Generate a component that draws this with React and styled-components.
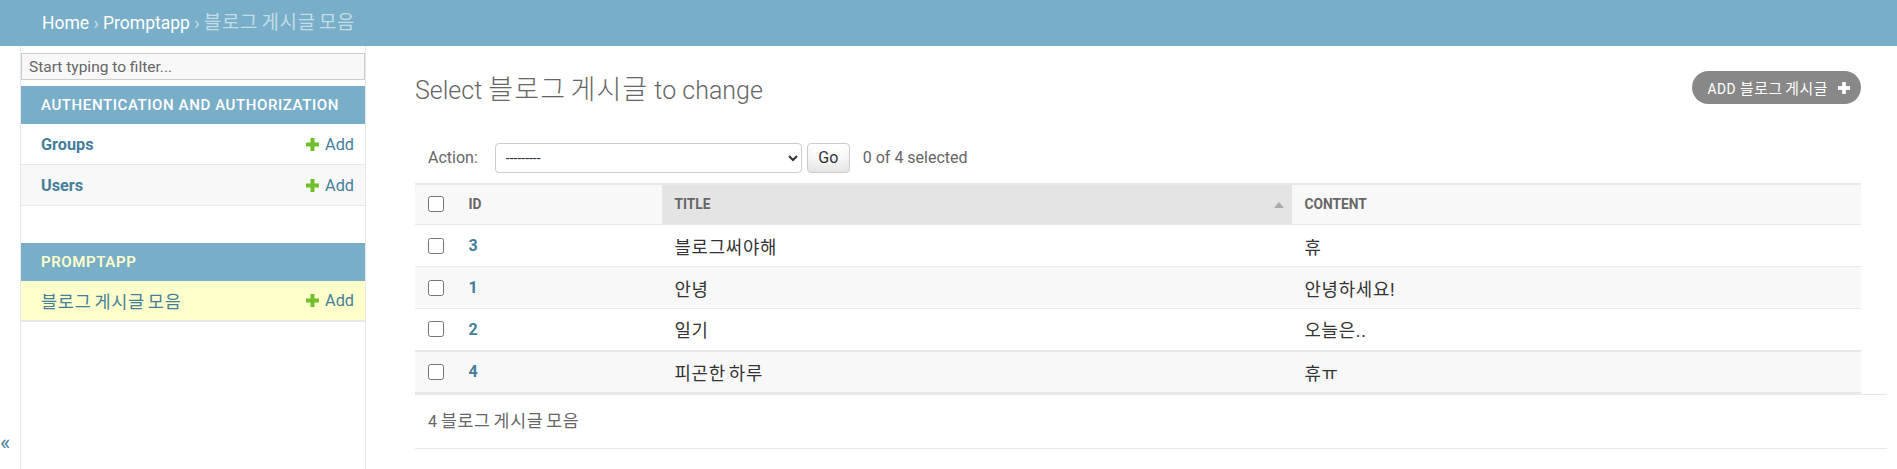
import React from 'react';
import styled, { createGlobalStyle } from 'styled-components';

const GlobalStyle = createGlobalStyle`
  html, body {
    margin: 0;
    padding: 0;
    background: #fff;
  }
  body {
    font-family: Roboto, "Noto Sans CJK KR", sans-serif;
    color: #333;
    font-size: 16.25px;
  }
  * { box-sizing: border-box; }
`;

// hangul in the original is a bit wider than the fallback font, spaces narrower
const Ko = styled.span`
  font-size: 1.08em;
  letter-spacing: 0.04em;
  word-spacing: -0.12em;
`;

const Breadcrumbs = styled.div`
  height: 46px;
  padding: 0 42px;
  background: #79aec8;
  color: #c4dce8;
  font-size: 17.5px;
  line-height: 45px;
  a {
    color: #fff;
    text-decoration: none;
  }
`;

const Main = styled.div`
  display: flex;
  min-height: calc(100vh - 46px);
`;

const Toggle = styled.button`
  flex: 0 0 21px;
  display: flex;
  align-items: flex-end;
  justify-content: flex-start;
  padding: 0 0 14px 0;
  border: 0;
  border-right: 1px solid #e8e8e8;
  background: #fff;
  color: #447e9b;
  font-family: Roboto, sans-serif;
  font-size: 22px;
  cursor: pointer;
`;

const Sidebar = styled.nav`
  flex: 0 0 345px;
  border-right: 1px solid #e8e8e8;
`;

const FilterInput = styled.input`
  display: block;
  width: 100%;
  height: 27px;
  margin: 7px 0 6px;
  padding: 2px 7px;
  border: 1px solid #ccc;
  background: #f8f8f8;
  font-family: Roboto, sans-serif;
  font-size: 15.5px;
  color: #333;
  &::placeholder { color: #666; }
`;

const Module = styled.div`
  margin-bottom: 37px;
`;

const Caption = styled.div`
  height: 38px;
  padding: 0 20px;
  display: flex;
  align-items: center;
  background: #79aec8;
  color: ${(p) => (p.current ? '#ffc' : '#fff')};
  font-size: 15px;
  font-weight: ${(p) => (p.current ? 600 : 500)};
  letter-spacing: 0.6px;
  text-transform: uppercase;
`;

const NavRow = styled.div`
  height: 41px;
  display: flex;
  align-items: center;
  justify-content: space-between;
  padding: 0 11px 0 20px;
  background: ${(p) => p.bg || '#fff'};
  border-bottom: ${(p) => (p.thick ? 2 : 1)}px solid #e8e8e8;
`;

const NavLink = styled.a`
  color: #447e9b;
  font-weight: ${(p) => (p.bold ? 700 : 400)};
  text-decoration: none;
`;

const AddLink = styled.a`
  display: flex;
  align-items: center;
  gap: 6px;
  color: #447e9b;
  text-decoration: none;
`;

const Content = styled.div`
  flex: 1;
  min-width: 0;
  padding: 25px 10px 0 49px;
`;

const Inner = styled.div`
  margin-right: 26px;
`;

const TitleRow = styled.div`
  display: flex;
  justify-content: space-between;
  align-items: flex-start;
`;

const Title = styled.h1`
  margin: 0;
  font-size: 25px;
  font-weight: 300;
  line-height: 38px;
  color: #666;
`;

const ObjectTool = styled.a`
  display: flex;
  align-items: center;
  gap: 10px;
  height: 33px;
  padding: 0 11px 0 16px;
  border-radius: 17px;
  background: #888;
  color: #fff;
  font-size: 13.75px;
  letter-spacing: 0.5px;
  text-transform: uppercase;
  text-decoration: none;
  white-space: nowrap;
`;

const Actions = styled.div`
  display: flex;
  align-items: center;
  margin-top: 20px;
  padding: 12.5px 13px 10px;
  line-height: 30px;
  color: #666;
  font-size: 16px;
`;

const ActionSelect = styled.select`
  width: 307px;
  height: 30px;
  margin-left: 17px;
  padding: 0 6px;
  border: 1px solid #ccc;
  border-radius: 4px;
  background: #fff;
  color: #333;
  font-family: Roboto, sans-serif;
  font-size: 14px;
`;

const GoButton = styled.button`
  height: 30px;
  width: 43px;
  margin-left: 5px;
  border: 1px solid #ccc;
  border-radius: 4px;
  background: #fff;
  box-shadow: 0 -15px 20px -10px rgba(0, 0, 0, 0.15) inset;
  color: #333;
  font-family: Roboto, sans-serif;
  font-size: 16px;
`;

const Counter = styled.span`
  margin-left: 13px;
`;

const Table = styled.table`
  width: 100%;
  border-collapse: collapse;
  table-layout: fixed;
`;

const Th = styled.th`
  height: 41px;
  padding: 0 12.5px;
  text-align: left;
  background: ${(p) => (p.sorted ? '#e4e4e4' : '#f8f8f8')};
  border-top: 2px solid #e8e8e8;
  border-bottom: 1px solid #e8e8e8;
  color: #666;
  font-size: 13.75px;
  font-weight: 700;
  text-transform: uppercase;
  position: relative;
`;

const SortArrow = styled.span`
  position: absolute;
  right: 8px;
  top: 50%;
  margin-top: -2px;
  width: 0;
  height: 0;
  border-left: 5.5px solid transparent;
  border-right: 5.5px solid transparent;
  border-bottom: 6px solid #aaa;
`;

const Tr = styled.tr`
  background: ${(p) => (p.odd ? '#f8f8f8' : '#fff')};
`;

const Td = styled.td`
  height: 42px;
  padding: 0 12.5px;
  border-bottom: ${(p) => (p.thick ? 2 : 1)}px solid #e8e8e8;
  font-size: 16.5px;
  color: #333;
  vertical-align: middle;
`;

const IdLink = styled.a`
  color: #447e9b;
  font-size: 16px;
  font-weight: 700;
  text-decoration: none;
`;

const Check = styled.input`
  width: 16px;
  height: 16px;
  margin: 0;
  display: block;
`;

const Paginator = styled.div`
  padding: 12px 13px;
  line-height: 28px;
  border-top: 1px solid #e8e8e8;
  border-bottom: 1px solid #e8e8e8;
  color: #666;
  font-size: 16px;
`;

function PlusIcon({ color = '#70bf2b', size = 13 }) {
  return (
    <svg width={size} height={size} viewBox="0 0 13 13">
      <rect x="4.5" y="0" width="4" height="13" fill={color} />
      <rect x="0" y="4.5" width="13" height="4" fill={color} />
    </svg>
  );
}

const posts = [
  { id: 3, title: '블로그써야해', content: '휴' },
  { id: 1, title: '안녕', content: '안녕하세요!' },
  { id: 2, title: '일기', content: '오늘은..' },
  { id: 4, title: '피곤한 하루', content: '휴ㅠ' },
];

export default function App() {
  return (
    <>
      <GlobalStyle />
      <Breadcrumbs>
        <a href="#">Home</a> › <a href="#">Promptapp</a> › <Ko>블로그 게시글 모음</Ko>
      </Breadcrumbs>
      <Main>
        <Toggle>«</Toggle>
        <Sidebar>
          <FilterInput placeholder="Start typing to filter..." />
          <Module>
            <Caption>Authentication and Authorization</Caption>
            <NavRow>
              <NavLink bold href="#">Groups</NavLink>
              <AddLink href="#"><PlusIcon />Add</AddLink>
            </NavRow>
            <NavRow bg="#f8f8f8">
              <NavLink bold href="#">Users</NavLink>
              <AddLink href="#"><PlusIcon />Add</AddLink>
            </NavRow>
          </Module>
          <Module>
            <Caption current>Promptapp</Caption>
            <NavRow bg="#ffc" thick>
              <NavLink href="#"><Ko>블로그 게시글 모음</Ko></NavLink>
              <AddLink href="#"><PlusIcon />Add</AddLink>
            </NavRow>
          </Module>
        </Sidebar>
        <Content>
          <Inner>
            <TitleRow>
              <Title>Select <Ko>블로그 게시글</Ko> to change</Title>
              <ObjectTool href="#">
                <span>ADD <Ko>블로그 게시글</Ko></span>
                <PlusIcon color="#fff" size={12} />
              </ObjectTool>
            </TitleRow>
            <Actions>
              <label>Action:</label>
              <ActionSelect defaultValue="">
                <option value="">---------</option>
              </ActionSelect>
              <GoButton>Go</GoButton>
              <Counter>0 of 4 selected</Counter>
            </Actions>
            <Table>
              <colgroup>
                <col style={{ width: '41px' }} />
                <col style={{ width: '206px' }} />
                <col style={{ width: '630px' }} />
                <col />
              </colgroup>
              <thead>
                <tr>
                  <Th><Check type="checkbox" /></Th>
                  <Th>ID</Th>
                  <Th sorted>Title<SortArrow /></Th>
                  <Th>Content</Th>
                </tr>
              </thead>
              <tbody>
                {posts.map((p, i) => (
                  <Tr key={p.id} odd={i % 2 === 1}>
                    <Td thick={i >= 2}><Check type="checkbox" /></Td>
                    <Td thick={i >= 2}><IdLink href="#">{p.id}</IdLink></Td>
                    <Td thick={i >= 2}><Ko>{p.title}</Ko></Td>
                    <Td thick={i >= 2}><Ko>{p.content}</Ko></Td>
                  </Tr>
                ))}
              </tbody>
            </Table>
          </Inner>
          <Paginator>4 <Ko>블로그 게시글 모음</Ko></Paginator>
        </Content>
      </Main>
    </>
  );
}
